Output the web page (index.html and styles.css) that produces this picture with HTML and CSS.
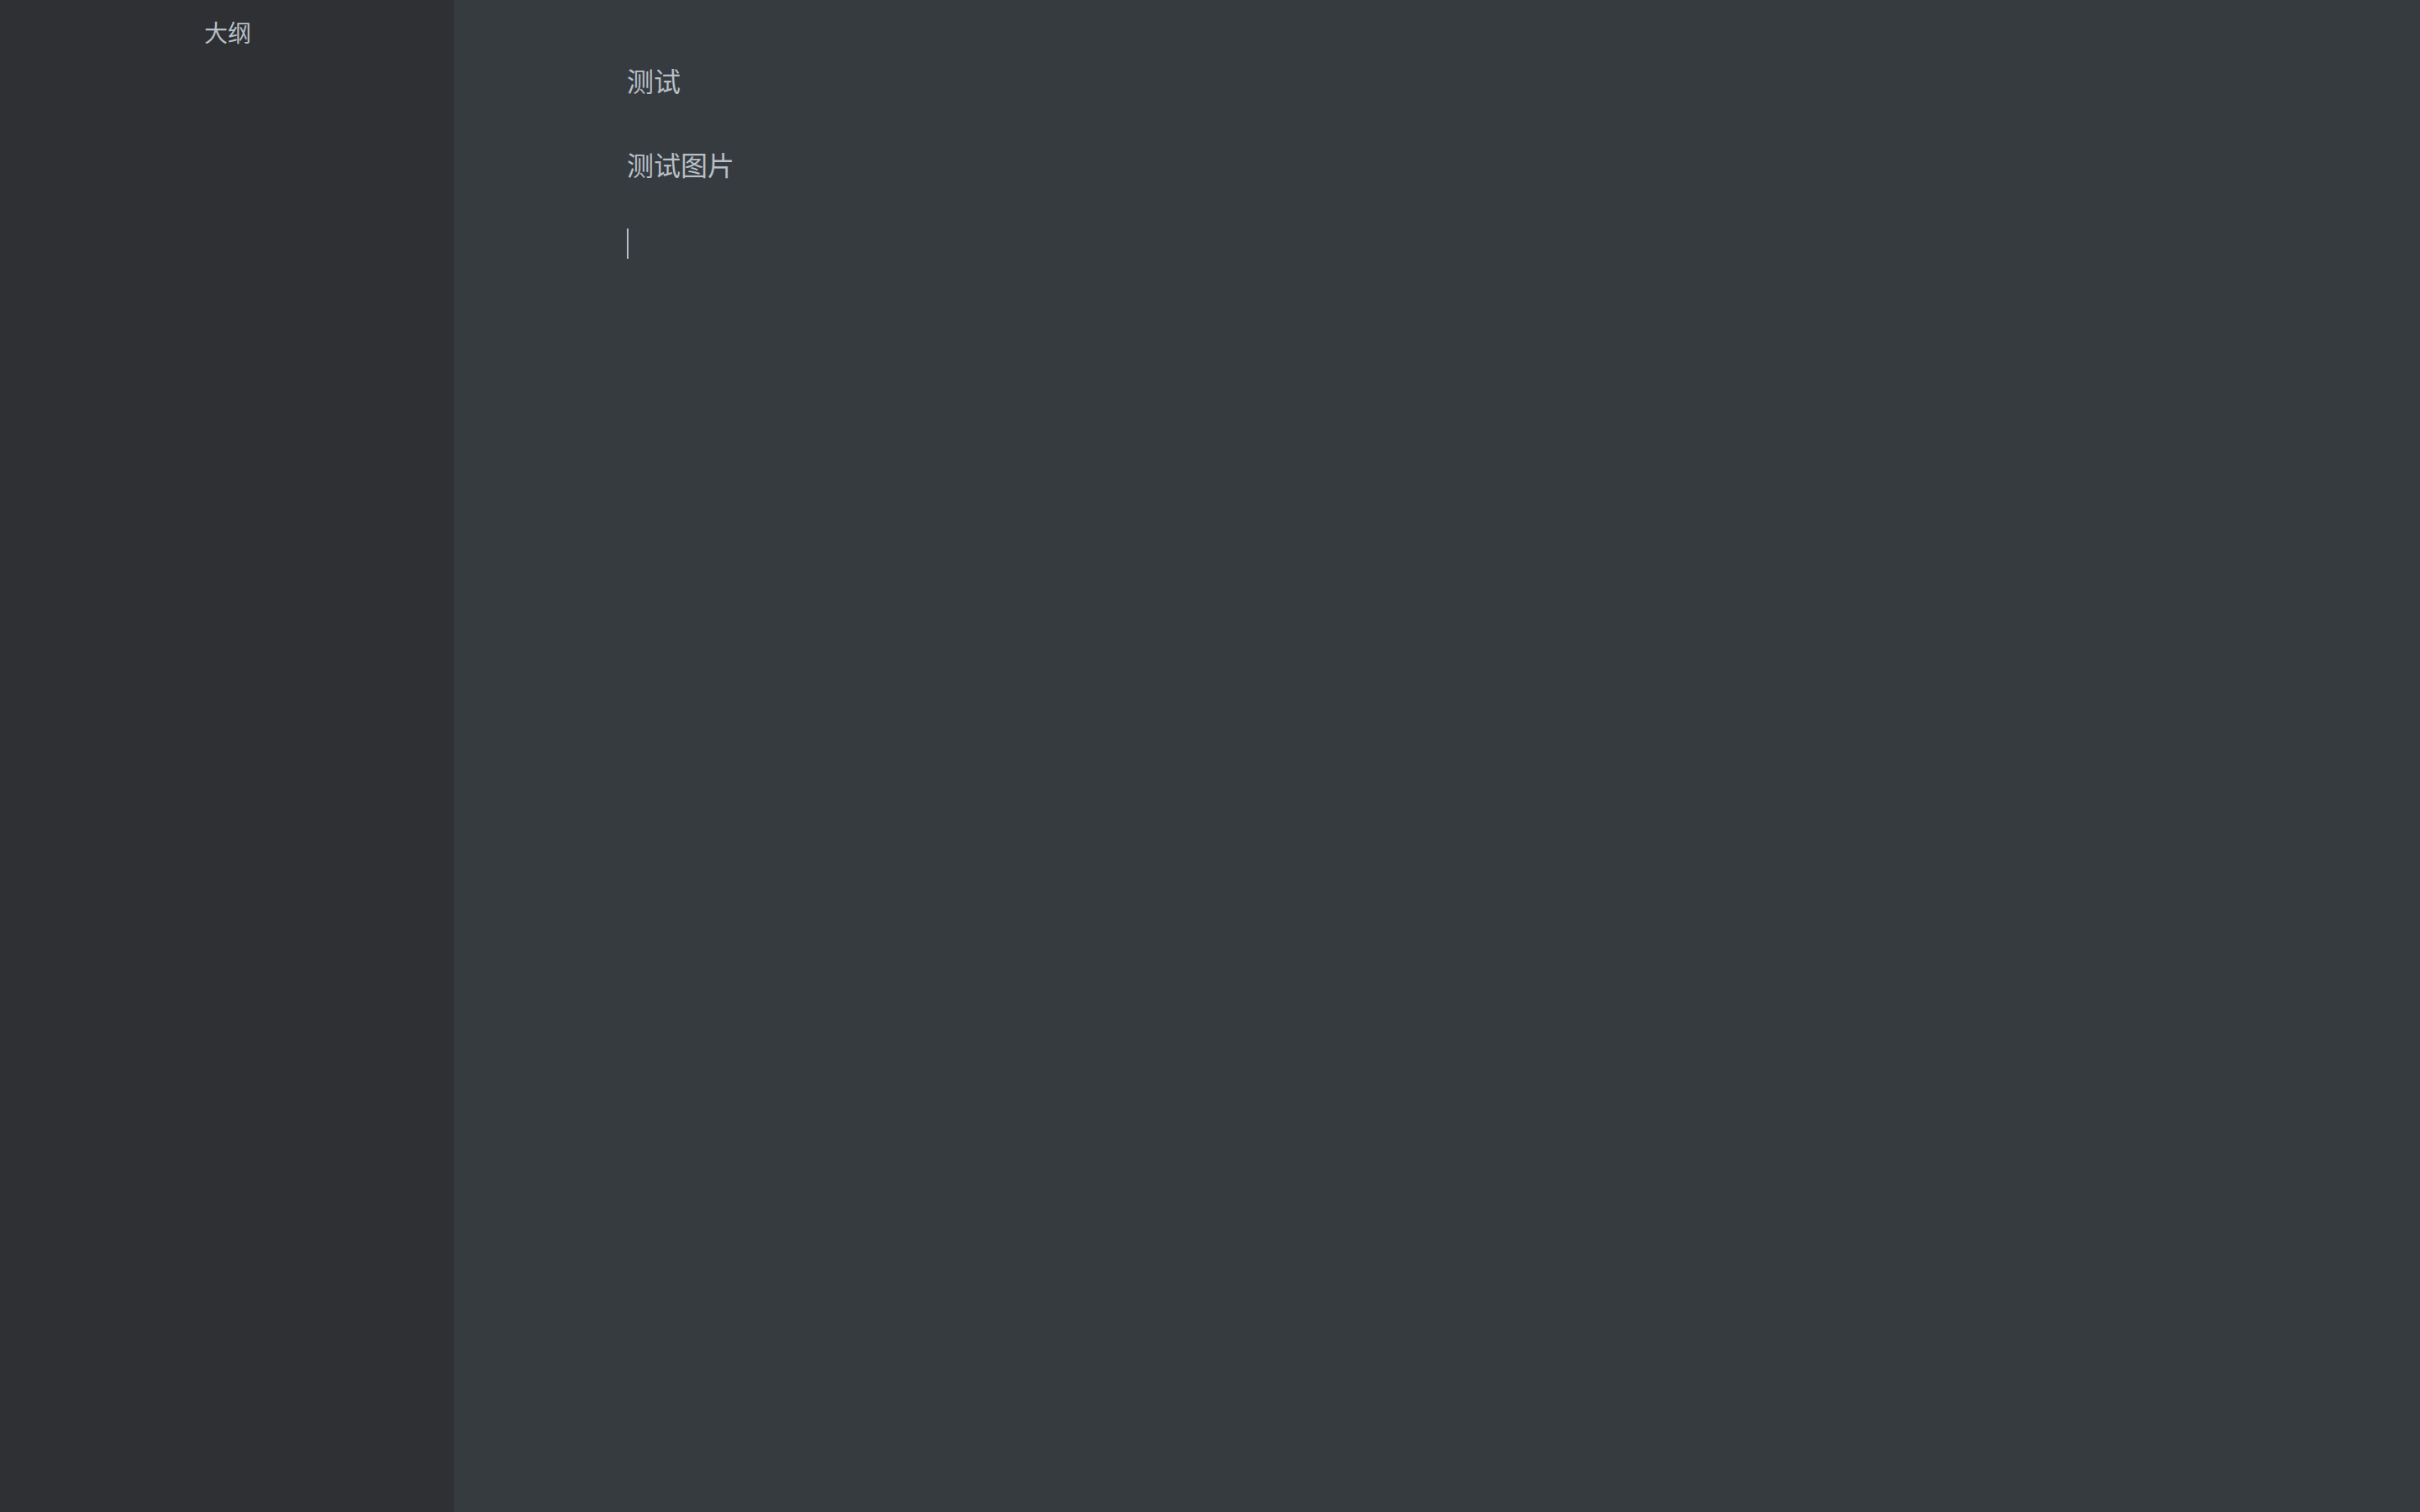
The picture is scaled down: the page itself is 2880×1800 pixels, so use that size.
FILE: index.html
```html
<!DOCTYPE html>
<html lang="zh">
<head>
<meta charset="utf-8">
<title>大纲</title>
<link rel="stylesheet" href="styles.css">
</head>
<body>
<div class="app">
  <aside class="sidebar">
    <div class="outline-title">大纲</div>
  </aside>
  <main class="editor">
    <p class="para">测试</p>
    <p class="para">测试图片</p>
    <p class="para"><span class="caret"></span></p>
  </main>
</div>
</body>
</html>
```
FILE: styles.css
```css
html, body {
  margin: 0;
  padding: 0;
  height: 100%;
}
body {
  background: #363b40;
  font-family: "Noto Sans CJK SC", "Noto Sans", sans-serif;
  color: #b8bfc6;
}
.app {
  display: flex;
  height: 1800px;
}
.sidebar {
  width: 540px;
  flex: none;
  background: #2e3033;
  padding: 18px 0 0 243px;
  box-sizing: border-box;
}
.outline-title {
  font-size: 28px;
  line-height: 40px;
  color: #b8bfc6;
}
.editor {
  flex: 1;
  background: #363b40;
  padding: 69px 0 0 206px;
  display: flex;
  flex-direction: column;
  gap: 48px;
}
.para {
  margin: 0;
  font-size: 32px;
  line-height: 52px;
  height: 52px;
}
.caret {
  display: block;
  width: 2px;
  height: 36px;
  margin-top: 3px;
  background: #b8bfc6;
}
```
